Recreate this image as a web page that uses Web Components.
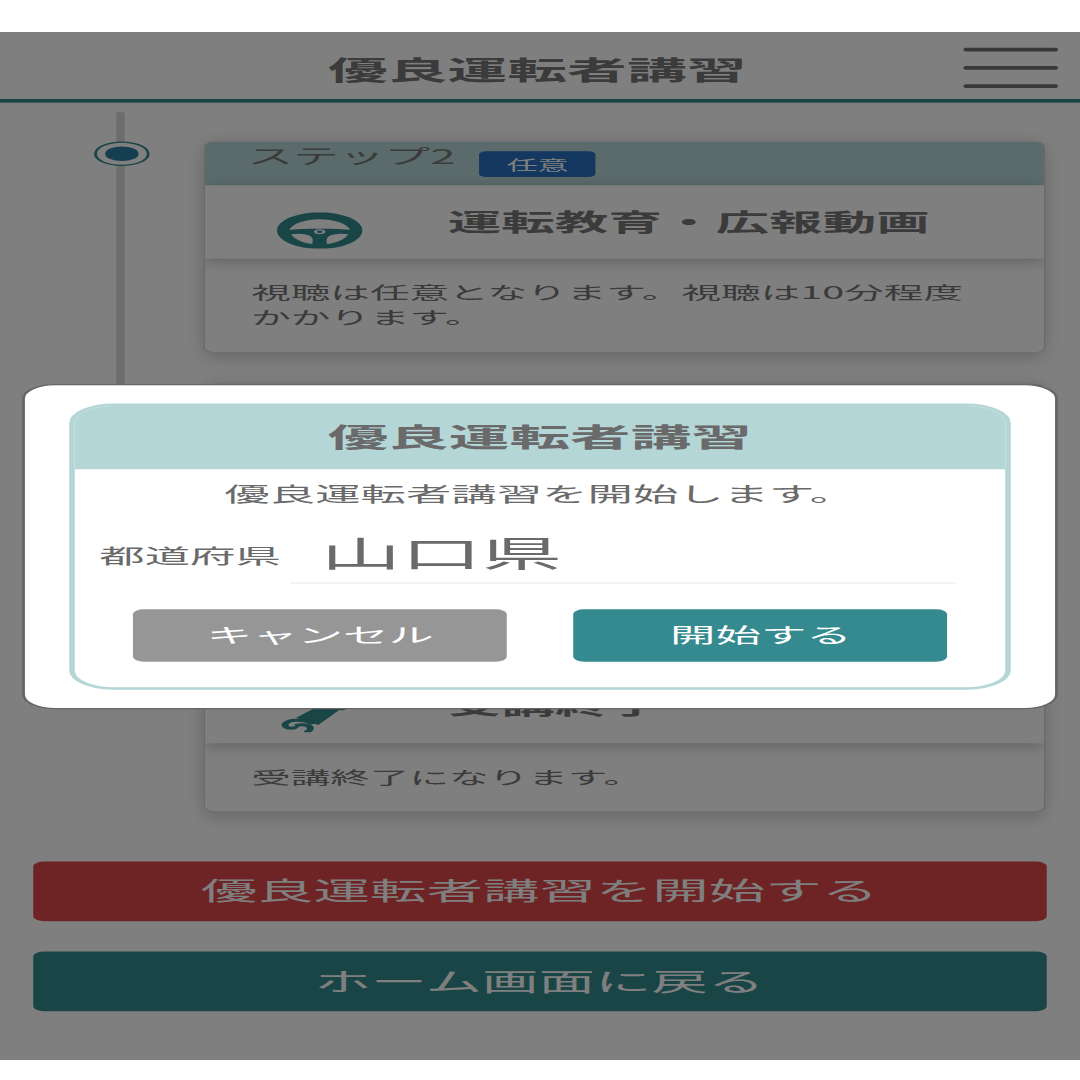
<!DOCTYPE html>
<html lang="ja">
<head>
<meta charset="utf-8">
<title>優良運転者講習</title>
<style>
  html { background: #fff; }
  body { margin: 0; padding: 0; height: 1080px; overflow: hidden; font-family: "Noto Sans CJK JP", "Noto Sans", sans-serif; }
</style>
</head>
<body>
<course-page>
  <page-header title="優良運転者講習"></page-header>
  <step-timeline>
    <course-step label="ステップ2" badge="任意" heading="運転教育・広報動画" icon="wheel" lines="2">視聴は任意となります。視聴は10分程度かかります。</course-step>
    <course-step lines="2"></course-step>
    <course-step heading="受講終了" icon="scroll" lines="1">受講終了になります。</course-step>
  </step-timeline>
  <action-button color="#dc4848">優良運転者講習を開始する</action-button>
  <action-button color="#348a8e">ホーム画面に戻る</action-button>
  <start-dialog slot="overlay" title="優良運転者講習" message="優良運転者講習を開始します。" label="都道府県" value="山口県"></start-dialog>
</course-page>

<script>
// the reference is a 390x844 phone page stretched to 1080x1028
class CoursePage extends HTMLElement {
  constructor() {
    super();
    this.attachShadow({ mode: "open" });
    this.shadowRoot.innerHTML = `
      <style>
        :host {
          display: block;
          position: relative;
          top: 32px;
          width: 390px;
          height: 844px;
          overflow: hidden;
          background: #fff;
          color: #777;
          transform-origin: 0 0;
          transform: scale(2.7692, 1.218);
        }
        .overlay {
          position: absolute;
          inset: 0;
          background: rgba(0, 0, 0, 0.5);
        }
      </style>
      <slot></slot>
      <div class="overlay"><slot name="overlay"></slot></div>
    `;
  }
}

class PageHeader extends HTMLElement {
  constructor() {
    super();
    this.attachShadow({ mode: "open" });
    this.shadowRoot.innerHTML = `
      <style>
        :host {
          display: flex;
          position: relative;
          align-items: center;
          justify-content: center;
          height: 54.5px;
          border-bottom: 3px solid #348a8e;
        }
        h1 { margin: 5.4px 2px 0 0; font-size: 21.6px; font-weight: 700; line-height: 30px; }
        .menu {
          position: absolute;
          top: 13px;
          right: 8px;
          width: 34.3px;
          display: flex;
          flex-direction: column;
          gap: 11.6px;
        }
        .menu i { display: block; height: 3.2px; border-radius: 1px; background: #707070; }
      </style>
      <h1></h1>
      <div class="menu"><i></i><i></i><i></i></div>
    `;
  }
  connectedCallback() {
    this.shadowRoot.querySelector("h1").textContent = this.getAttribute("title");
    this.removeAttribute("title");
  }
}

class StepTimeline extends HTMLElement {
  constructor() {
    super();
    this.attachShadow({ mode: "open" });
    this.shadowRoot.innerHTML = `
      <style>
        :host {
          display: flex;
          flex-direction: column;
          gap: 25.5px;
          position: relative;
          margin-top: 8.2px;
          padding: 24.6px 13px 0 33.5px;
        }
        :host::before {
          content: "";
          position: absolute;
          left: 42.4px;
          top: 0;
          width: 2.2px;
          height: 460px;
          background: #d8d8d8;
        }
      </style>
      <slot></slot>
    `;
  }
}

const ICONS = {
  wheel: `<svg viewBox="0 0 30 30" preserveAspectRatio="none">
    <path fill="#348a8e" fill-rule="evenodd" d="M15 0A15 15 0 1 1 15 30A15 15 0 1 1 15 0Z
      M4.4 14.5A10.8 10.8 0 0 1 25.6 14.5C22 13.6 19 13.6 15 13.6C11 13.6 8 13.6 4.4 14.5Z
      M5 18C8 17 10.5 17.8 11.8 19.6C12.8 21.5 12.6 24 12.4 26C9 25 6 22 5 18Z
      M25 18C22 17 19.5 17.8 18.2 19.6C17.2 21.5 17.4 24 17.6 26C21 25 24 22 25 18Z
      M15 14A2 2 0 1 1 15 18A2 2 0 1 1 15 14Z
      M15 15A1 1 0 1 0 15 17A1 1 0 1 0 15 15Z"/>
  </svg>`,
  scroll: `<svg viewBox="0 0 30 30" preserveAspectRatio="none">
    <path fill="#348a8e" d="M6.7 18L19 3L27 3L14.5 24Z"/>
    <path fill="#348a8e" d="M21 11L30 0L30 6L23 12Z"/>
    <path fill="none" stroke="#348a8e" stroke-width="2.4" d="M12.9 23C9 18.5 3 19.5 2.8 24C3 27.5 7 27 6.2 25"/>
    <path fill="none" stroke="#348a8e" stroke-width="2.4" d="M6.5 24.5C10 22.5 12.5 25 11.5 28C11 29.8 10 30 9.5 30"/>
  </svg>`,
};

class CourseStep extends HTMLElement {
  constructor() {
    super();
    this.attachShadow({ mode: "open" });
    this.shadowRoot.innerHTML = `
      <style>
        :host { display: flex; gap: 20px; position: relative; }
        .node {
          flex: none;
          box-sizing: border-box;
          width: 20.6px;
          height: 20px;
          padding: 3.2px;
          border: 1px solid #348a8e;
          border-radius: 50%;
          background: #fff;
        }
        .node i { display: block; height: 100%; border-radius: 50%; background: #2a7fa0; }
        .card {
          flex: 1;
          min-width: 0;
          border-radius: 4px;
          background: #fff;
          box-shadow: 0 0 0 0.3px #ccc, 0 3px 10px rgba(0, 0, 0, 0.22);
          overflow: hidden;
        }
        .band {
          display: flex;
          align-items: flex-start;
          height: 35.3px;
          padding-left: 15.3px;
          background: #b7d6d6;
        }
        .label { font-size: 16.5px; line-height: 23px; }
        .badge {
          margin: 8.2px 0 0 8.6px;
          width: 42px;
          height: 20.5px;
          border-radius: 2.5px;
          background: #2870c0;
          color: #fff;
          font-size: 11.2px;
          line-height: 20.5px;
          text-align: center;
        }
        .row {
          position: relative;
          display: flex;
          align-items: flex-start;
          height: 60.7px;
          background: #fff;
          box-shadow: 0 3px 8px rgba(0, 0, 0, 0.25);
        }
        .icon { width: 30.9px; height: 30px; margin: 22.4px 0 0 25.7px; flex: none; }
        .icon svg { display: block; width: 100%; height: 100%; }
        h2 {
          margin: 15.4px 0 0 31px;
          font-size: 19.35px;
          font-weight: 700;
          line-height: 28px;
          white-space: pre;
        }
        .body {
          box-sizing: border-box;
          padding: 17px 16.6px;
          font-size: 14.3px;
          line-height: 20.6px;
        }
      </style>
      <div class="node"><i></i></div>
      <div class="card">
        <div class="band"><span class="label"></span></div>
        <div class="row"><div class="icon"></div><h2></h2></div>
        <div class="body"><slot></slot></div>
      </div>
    `;
  }
  connectedCallback() {
    const root = this.shadowRoot;
    root.querySelector(".label").textContent = this.getAttribute("label") || "";
    root.querySelector("h2").textContent = this.getAttribute("heading") || "";
    const badge = this.getAttribute("badge");
    if (badge) {
      const el = document.createElement("div");
      el.className = "badge";
      el.textContent = badge;
      root.querySelector(".band").append(el);
    }
    root.querySelector(".icon").innerHTML = ICONS[this.getAttribute("icon")] || "";
    const lines = Number(this.getAttribute("lines") || 1);
    root.querySelector(".body").style.minHeight = 36 + lines * 20.6 + "px";
  }
}

class ActionButton extends HTMLElement {
  constructor() {
    super();
    this.attachShadow({ mode: "open" });
    this.shadowRoot.innerHTML = `
      <style>
        :host {
          display: block;
          margin: 25.3px 12.5px 0 12.1px;
          border-radius: 4px;
          height: 49px;
          color: #fff;
          font-size: 20.4px;
          line-height: 46px;
          text-align: center;
          background: var(--bg);
        }
      </style>
      <slot></slot>
    `;
  }
  connectedCallback() {
    this.style.setProperty("--bg", this.getAttribute("color"));
    if (this.previousElementSibling.localName === "step-timeline") {
      this.style.marginTop = "40.6px";
    }
  }
}

class StartDialog extends HTMLElement {
  constructor() {
    super();
    this.attachShadow({ mode: "open" });
    this.shadowRoot.innerHTML = `
      <style>
        :host {
          display: block;
          position: absolute;
          left: 8.1px;
          top: 288.6px;
          box-sizing: border-box;
          width: 373.7px;
          height: 267.4px;
          padding: 15.8px 15.9px;
          border: 0.5px solid #666;
          border-radius: 12px;
          background: #fff;
          color: #6a6a6a;
        }
        .panel {
          box-sizing: border-box;
          height: 235px;
          border: 2px solid #b5d6d6;
          border-radius: 16px;
          overflow: hidden;
        }
        h1 {
          margin: 0;
          height: 51.8px;
          background: #b5d6d6;
          font-size: 21.9px;
          font-weight: 700;
          line-height: 50px;
          text-align: center;
        }
        .message { margin-top: 7.8px; font-size: 16.4px; line-height: 24px; text-align: center; }
        .field { display: flex; align-items: flex-start; margin-top: 16.5px; padding-left: 8.9px; }
        .field label { width: 69.4px; margin-top: 10.3px; font-size: 16.4px; line-height: 24px; white-space: nowrap; }
        .value {
          width: 240px;
          box-sizing: border-box;
          height: 45.8px;
          padding-left: 10.6px;
          border-bottom: 1px solid #e6eeee;
          font-size: 29px;
          line-height: 38.3px;
        }
        .buttons { display: flex; gap: 24.1px; margin-top: 21px; padding-left: 21.2px; }
        .buttons div {
          width: 135px;
          height: 43.2px;
          border-radius: 4px;
          color: #fff;
          font-size: 16.4px;
          line-height: 42px;
          text-align: center;
        }
        .cancel { background: #969696; }
        .start { background: #348a8e; }
      </style>
      <div class="panel">
        <h1></h1>
        <div class="message"></div>
        <div class="field"><label></label><div class="value"></div></div>
        <div class="buttons">
          <div class="cancel">キャンセル</div>
          <div class="start">開始する</div>
        </div>
      </div>
    `;
  }
  connectedCallback() {
    const root = this.shadowRoot;
    root.querySelector("h1").textContent = this.getAttribute("title");
    root.querySelector(".message").textContent = this.getAttribute("message");
    root.querySelector("label").textContent = this.getAttribute("label");
    root.querySelector(".value").textContent = this.getAttribute("value");
    this.removeAttribute("title");
  }
}

customElements.define("course-page", CoursePage);
customElements.define("page-header", PageHeader);
customElements.define("step-timeline", StepTimeline);
customElements.define("course-step", CourseStep);
customElements.define("action-button", ActionButton);
customElements.define("start-dialog", StartDialog);
</script>
</body>
</html>
